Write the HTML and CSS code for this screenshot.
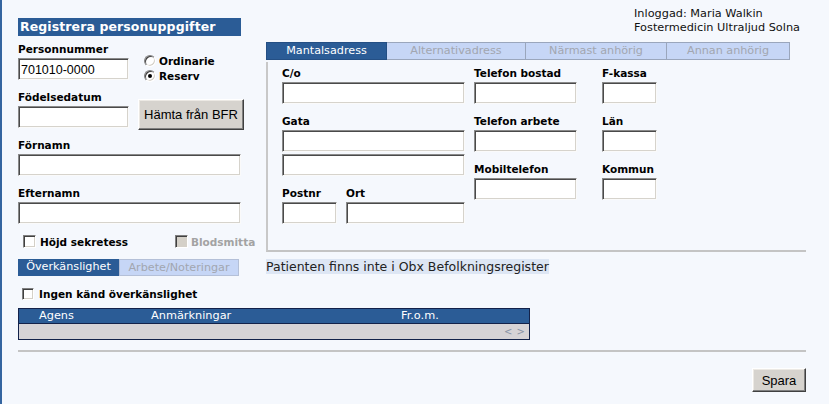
FILE: index.html
```html
<!DOCTYPE html>
<html lang="sv">
<head>
<meta charset="utf-8">
<title>Registrera personuppgifter</title>
<link rel="stylesheet" href="styles.css">
</head>
<body>
<div class="page">
  <div class="grid">
    <section class="left">
      <h1 class="title">Registrera personuppgifter</h1>
      <div class="idrow">
        <div class="idcol">
          <div class="field">
            <div class="lbl">Personnummer</div>
            <input class="inp w111" value="701010-0000">
          </div>
          <div class="field">
            <div class="lbl">Födelsedatum</div>
            <input class="inp w111">
          </div>
        </div>
        <div class="side">
          <div class="radios">
            <div class="opt"><span class="radio"></span><span class="blbl">Ordinarie</span></div>
            <div class="opt"><span class="radio on"></span><span class="blbl">Reserv</span></div>
          </div>
          <button class="btn bfr">Hämta från BFR</button>
        </div>
      </div>
      <div class="field">
        <div class="lbl">Förnamn</div>
        <input class="inp w223">
      </div>
      <div class="field">
        <div class="lbl">Efternamn</div>
        <input class="inp w223">
      </div>
      <div class="checks">
        <div class="opt sek"><span class="cb"></span><span class="blbl">Höjd sekretess</span></div>
        <div class="opt dis"><span class="cb off"></span><span class="blbl">Blodsmitta</span></div>
      </div>
    </section>

    <section class="right">
      <div class="user">Inloggad: Maria Walkin<br>Fostermedicin Ultraljud Solna</div>
      <div class="tabs">
        <div class="tab active t1">Mantalsadress</div>
        <div class="tab t2">Alternativadress</div>
        <div class="tab t3">Närmast anhörig</div>
        <div class="tab t4">Annan anhörig</div>
      </div>
      <div class="panel">
        <div class="pcol c1">
          <div class="field">
            <div class="lbl">C/o</div>
            <input class="inp w183">
          </div>
          <div class="field">
            <div class="lbl">Gata</div>
            <input class="inp w183">
            <input class="inp w183 second">
          </div>
          <div class="addr">
            <div class="field">
              <div class="lbl">Postnr</div>
              <input class="inp w55">
            </div>
            <div class="field">
              <div class="lbl">Ort</div>
              <input class="inp w119">
            </div>
          </div>
        </div>
        <div class="pcol c2">
          <div class="field">
            <div class="lbl">Telefon bostad</div>
            <input class="inp w103">
          </div>
          <div class="field">
            <div class="lbl">Telefon arbete</div>
            <input class="inp w103">
          </div>
          <div class="field">
            <div class="lbl">Mobiltelefon</div>
            <input class="inp w103">
          </div>
        </div>
        <div class="pcol c3">
          <div class="field">
            <div class="lbl">F-kassa</div>
            <input class="inp w55">
          </div>
          <div class="field">
            <div class="lbl">Län</div>
            <input class="inp w55">
          </div>
          <div class="field">
            <div class="lbl">Kommun</div>
            <input class="inp w55">
          </div>
        </div>
      </div>
    </section>

    <div class="subtabs">
      <div class="stab active s1">Överkänslighet</div>
      <div class="stab s2">Arbete/Noteringar</div>
    </div>
    <div class="msg"><span>Patienten finns inte i Obx Befolkningsregister</span></div>
  </div>

  <div class="opt none"><span class="cb"></span><span class="blbl">Ingen känd överkänslighet</span></div>

  <table class="list">
    <thead>
      <tr><th class="h1">Agens</th><th class="h2">Anmärkningar</th><th class="h3">Fr.o.m.</th></tr>
    </thead>
    <tbody>
      <tr><td colspan="3" class="nav">&lt; &gt;</td></tr>
    </tbody>
  </table>

  <div class="rule"></div>

  <div class="actions">
    <button class="btn spara">Spara</button>
  </div>
</div>
</body>
</html>
```

FILE: styles.css
```css
html, body {
  margin: 0;
  padding: 0;
}
body {
  background: #f5f8fd;
  font-family: "DejaVu Sans", Verdana, sans-serif;
  font-size: 11.3px;
  color: #111;
  min-height: 404px;
  border-left: 2px solid #3565a0;
  box-sizing: border-box;
}
.page {
  padding-left: 16px;
  width: 788px;
}
.grid {
  display: grid;
  grid-template-columns: 226px 540px;
  column-gap: 22px;
  row-gap: 7px;
}

/* left column */
.left {
  padding-top: 18px;
}
.title {
  margin: 0;
  width: 223px;
  height: 18px;
  box-sizing: border-box;
  background: #2b5c96;
  color: #fff;
  font-size: 12.5px;
  font-weight: bold;
  line-height: 18px;
  padding-left: 2px;
  letter-spacing: 0.1px;
}
.idrow {
  display: flex;
  gap: 9px;
  margin-top: 6px;
}
.field {
  display: flex;
  flex-direction: column;
  align-items: flex-start;
  margin-bottom: 10px;
}
.lbl {
  font-size: 10.5px;
  font-weight: bold;
  line-height: 14px;
  height: 14px;
  margin-bottom: 2px;
  color: #000;
}
.inp {
  height: 22px;
  box-sizing: border-box;
  border: 1px solid;
  border-color: #8a8a8a #fafafa #fafafa #8a8a8a;
  box-shadow: inset 1px 1px 0 #4a4a4a, inset -1px -1px 0 #d6d3cc;
  background: #fff;
  padding: 1px 2px 0;
  font-family: "Liberation Sans", Arial, sans-serif;
  font-size: 12.5px;
  color: #000;
  outline: none;
  margin: 0;
}
.inp.second { margin-top: 2px; }
.w111 { width: 111px; }
.w223 { width: 223px; }
.w183 { width: 183px; }
.w103 { width: 103px; }
.w55 { width: 55px; }
.w119 { width: 119px; }

.side {
  display: flex;
  flex-direction: column;
  align-items: flex-start;
}
.radios {
  padding: 13px 0 0 6px;
  display: flex;
  flex-direction: column;
  gap: 3px;
}
.opt {
  display: flex;
  align-items: center;
  gap: 3px;
  height: 12px;
  flex: none;
}
.blbl {
  font-size: 10.5px;
  font-weight: bold;
  line-height: 12px;
  color: #000;
  white-space: nowrap;
}
.radio {
  width: 12px;
  height: 12px;
  box-sizing: border-box;
  border-radius: 50%;
  border: 1px solid;
  border-color: #808080 #fff #fff #808080;
  box-shadow: inset 1px 1px 0 #404040, inset -1px -1px 0 #d4d0c8;
  background: #fff;
  position: relative;
  flex: none;
}
.radio.on::after {
  content: "";
  position: absolute;
  left: 3px;
  top: 3px;
  width: 4px;
  height: 4px;
  border-radius: 50%;
  background: #000;
}
.btn {
  background: #d6d3ce;
  border: 1px solid;
  border-color: #fff #404040 #404040 #fff;
  box-shadow: inset -1px -1px 0 #808080, inset 1px 1px 0 #ece9e4;
  font-family: "Liberation Sans", Arial, sans-serif;
  font-size: 13px;
  color: #000;
  padding: 0;
  margin: 0;
}
.bfr {
  width: 106px;
  height: 31px;
  margin-top: 17px;
}
.checks {
  display: flex;
  align-items: center;
  padding-left: 5px;
  margin-top: 2px;
  height: 15px;
}
.sek { width: 152px; }
.sek .blbl { margin-left: 1px; }
.cb {
  width: 13px;
  height: 13px;
  box-sizing: border-box;
  border: 1px solid;
  border-color: #808080 #fff #fff #808080;
  box-shadow: inset 1px 1px 0 #404040, inset -1px -1px 0 #d4d0c8;
  background: #fff;
  flex: none;
}
.cb.off { background: #d4d0c8; }
.dis .blbl { color: #a3a3a3; }

/* right column */
.user {
  margin-top: 7px;
  padding-left: 368px;
  line-height: 14px;
  font-size: 11.3px;
  color: #111;
}
.tabs {
  display: flex;
  margin-top: 7px;
  height: 18px;
}
.tab {
  box-sizing: border-box;
  height: 18px;
  line-height: 16px;
  text-align: center;
  font-size: 11.2px;
  background: #c6d6f6;
  color: #a2a6b0;
  border: 1px solid #9aa6bc;
  border-left: none;
}
.tab.active {
  background: #2b5c96;
  color: #fff;
  border: 1px solid #244f84;
}
.t1 { width: 121px; }
.t2 { width: 139px; }
.t3 { width: 141px; }
.t4 { width: 123px; }

.panel {
  margin-top: 2px;
  border-left: 2px solid #c8c8c8;
  border-bottom: 2px solid #c4c4c4;
  padding: 4px 0 16px 14px;
  display: flex;
}
.c1 { width: 183px; margin-right: 9px; }
.c2 { width: 103px; margin-right: 25px; }
.c3 { width: 55px; }
.addr {
  display: flex;
  gap: 9px;
}

.subtabs {
  display: flex;
  height: 17px;
}
.stab {
  box-sizing: border-box;
  height: 17px;
  line-height: 16px;
  font-size: 11.2px;
  text-align: center;
}
.s1 {
  width: 101px;
  background: #2b5c96;
  color: #fff;
}
.s2 {
  width: 120px;
  background: #c6d6f6;
  color: #a2a6b0;
  border: 1px solid #b4c0d8;
}
.msg {
  font-size: 12.5px;
  line-height: 14px;
  padding-top: 1px;
}
.msg span {
  background: #dde6f4;
  color: #222;
}

.none {
  margin: 11px 0 0 4px;
  height: 14px;
}
.none .blbl { margin-left: 2px; }
.none .cb { width: 12px; height: 12px; }

.list {
  margin-top: 7px;
  width: 512px;
  table-layout: fixed;
  border-collapse: collapse;
  border: 1px solid #13224a;
  font-size: 11.3px;
}
.list th {
  background: #2b5c96;
  color: #fff;
  font-weight: normal;
  text-align: left;
  height: 14px;
  padding: 0;
  line-height: 14px;
}
.h1 { width: 112px; padding-left: 20px !important; }
.h2 { width: 250px; }
.nav {
  background: #d6d3d6;
  height: 15px;
  padding: 0 4px 0 0;
  text-align: right;
  color: #8a94a6;
  font-size: 10px;
  line-height: 15px;
  border-top: 1px solid #13224a;
  word-spacing: 1px;
}

.rule {
  margin-top: 10px;
  height: 2px;
  background: #c4c4c4;
  width: 788px;
}
.actions {
  display: flex;
  justify-content: flex-end;
  margin-top: 16px;
}
.spara {
  width: 54px;
  height: 24px;
}
```
